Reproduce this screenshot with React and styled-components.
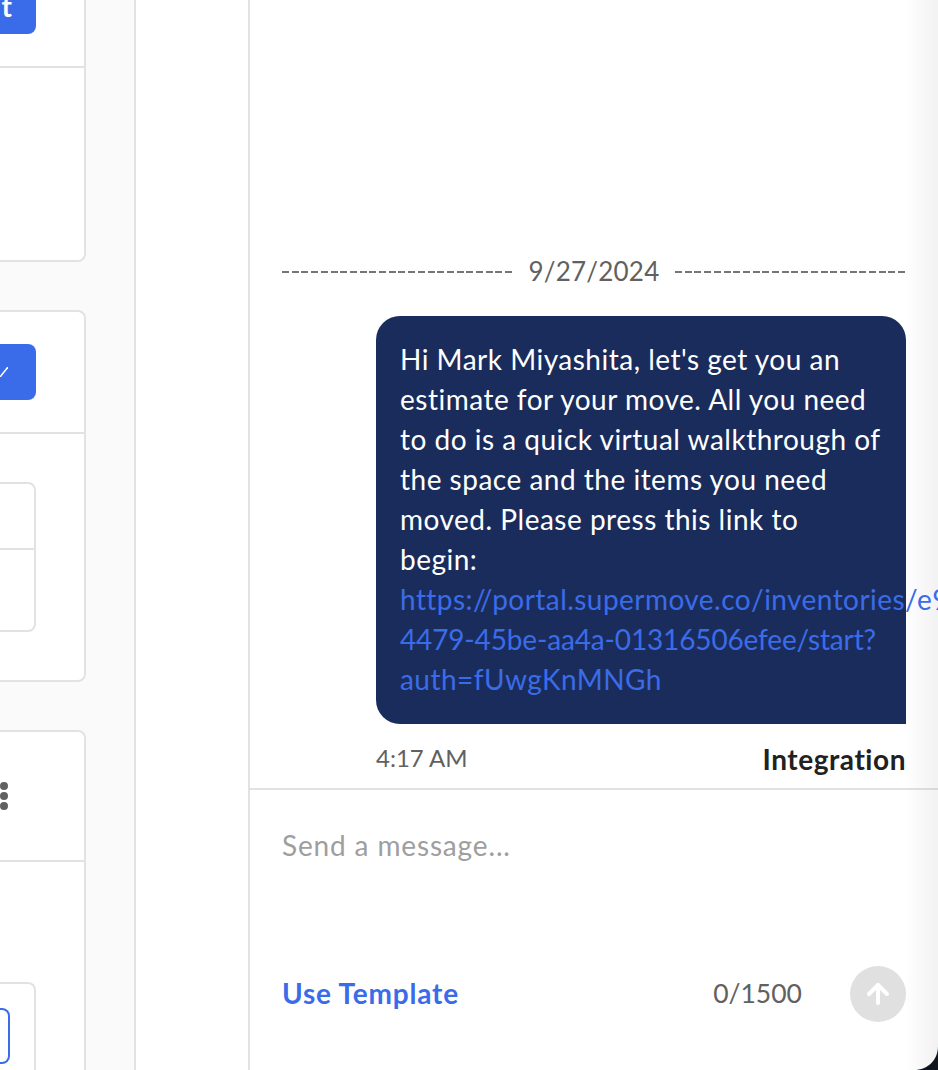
import React from 'react';
import styled, { createGlobalStyle } from 'styled-components';

const GlobalStyle = createGlobalStyle`
  html, body {
    margin: 0;
    padding: 0;
    height: 100%;
    overflow: hidden;
    background: #fff;
  }
  #root {
    height: 100%;
  }
`

const Page = styled.div`
  position: relative;
  display: flex;
  width: 938px;
  height: 1070px;
  overflow: hidden;
  background: #fafafa;
  font-family: Lato, "Liberation Sans", sans-serif;
  color: #212121;
`

const LeftColumn = styled.div`
  flex: none;
  width: 86px;
  height: 100%;
  display: flex;
  flex-direction: column;
`

const Card = styled.div`
  flex: none;
  height: ${props => props.$height}px;
  margin-top: ${props => props.$top || 0}px;
  margin-left: -20px;
  display: flex;
  flex-direction: column;
  box-sizing: border-box;
  background: #fff;
  border: 2px solid #e2e2e2;
  border-top-width: ${props => props.$open ? 0 : 2}px;
  border-bottom-width: ${props => props.$cut ? 0 : 2}px;
  border-radius: ${props => props.$open ? '0 0 8px 0' : props.$cut ? '8px 8px 0 0' : '8px'};
`

const CardHeader = styled.div`
  flex: none;
  height: ${props => props.$height}px;
  box-sizing: border-box;
  display: flex;
  justify-content: flex-end;
  align-items: ${props => props.$center ? 'center' : 'flex-end'};
  padding: 0 48px ${props => props.$center ? 0 : 32}px 0;
  border-bottom: 2px solid #e2e2e2;
`

const CardBody = styled.div`
  flex: 1;
  display: flex;
  flex-direction: column;
  align-items: flex-end;
  padding: ${props => props.$pad}px 48px 0 0;
`

const PrimaryButton = styled.div`
  flex: none;
  width: 60px;
  height: 56px;
  display: flex;
  justify-content: flex-end;
  align-items: center;
  padding-right: 24px;
  box-sizing: border-box;
  background: #3a6cea;
  border-radius: 0 8px 8px 0;
  color: #fff;
  font-size: 28px;
  font-weight: 700;
`

const EditIcon = styled.svg`
  margin-right: 4px;
`

const InnerTable = styled.div`
  width: 60px;
  height: ${props => props.$height}px;
  box-sizing: border-box;
  border: 2px solid #e2e2e2;
  border-left: 0;
  border-bottom-width: ${props => props.$cut ? 0 : 2}px;
  border-radius: ${props => props.$cut ? '0 8px 0 0' : '0 8px 8px 0'};
`

const TableLine = styled.div`
  height: 66px;
  box-sizing: border-box;
  border-bottom: 2px solid #e2e2e2;
`

const OutlineButton = styled.div`
  width: 34px;
  height: 56px;
  margin-top: 24px;
  margin-right: 26px;
  box-sizing: border-box;
  border: 2px solid #3a6cea;
  border-left: 0;
  border-radius: 0 8px 8px 0;
`

const Dots = styled.div`
  display: flex;
  flex-direction: column;
  gap: 2px;
  margin-right: 28px;
`

const Dot = styled.span`
  width: 8px;
  height: 8px;
  border-radius: 50%;
  background: #616161;
`

const Rail = styled.div`
  flex: none;
  width: 114px;
  height: 100%;
  margin-left: 48px;
  box-sizing: border-box;
  background: #fff;
  border-left: 2px solid #e2e2e2;
`

const ChatPanel = styled.div`
  flex: 1;
  min-width: 0;
  height: 100%;
  display: flex;
  flex-direction: column;
  box-sizing: border-box;
  background: #fff;
  border-left: 2px solid #e2e2e2;
`

const Thread = styled.div`
  flex: none;
  height: 790px;
  box-sizing: border-box;
  padding: 0 32px;
  display: flex;
  flex-direction: column;
  border-bottom: 2px solid #e2e2e2;
`

const DateRow = styled.div`
  margin-top: 255px;
  height: 32px;
  display: flex;
  align-items: center;
  gap: 16px;
  color: #616161;
  font-size: 26px;
  letter-spacing: 0.2px;
  line-height: 32px;
  white-space: nowrap;
`

const DashLine = styled.div`
  flex: 1;
  height: 2px;
  margin-top: 2px;
  background: repeating-linear-gradient(to right, #757575 0, #757575 7px, transparent 7px, transparent 9.7px);
`

const Bubble = styled.div`
  align-self: flex-end;
  width: 530px;
  height: 408px;
  margin-top: 29px;
  box-sizing: border-box;
  padding: 23px 24px 0;
  background: #1a2c5b;
  border-radius: 24px 24px 0 24px;
  color: #fff;
  font-size: 28px;
  letter-spacing: 0.5px;
  line-height: 40px;
`

const BubbleLink = styled.span`
  position: relative;
  z-index: 1;
  color: #3a6cea;
  letter-spacing: ${props => props.$spacing}px;
  white-space: nowrap;
`

const MetaRow = styled.div`
  align-self: flex-end;
  width: 530px;
  margin-top: 20px;
  display: flex;
  justify-content: space-between;
  align-items: center;
`

const Time = styled.div`
  color: #616161;
  font-size: 24px;
  line-height: 28px;
  padding-bottom: 2px;
`

const Sender = styled.div`
  color: #212121;
  font-size: 28px;
  font-weight: 700;
  letter-spacing: 0.55px;
  line-height: 30px;
`

const Composer = styled.div`
  flex: 1;
  display: flex;
  flex-direction: column;
  box-sizing: border-box;
  padding: 40px 32px 48px;
`

const Placeholder = styled.div`
  flex: 1;
  color: #9e9e9e;
  font-size: 28px;
  letter-spacing: 0.85px;
  line-height: 30px;
`

const ComposerFooter = styled.div`
  display: flex;
  align-items: center;
`

const TemplateLink = styled.div`
  flex: 1;
  color: #3a6cea;
  font-size: 28px;
  font-weight: 700;
  letter-spacing: 0.8px;
  padding-bottom: 2px;
`

const Counter = styled.div`
  color: #616161;
  font-size: 26.5px;
  margin-right: 48px;
  padding-bottom: 2px;
`

const SendButton = styled.div`
  width: 56px;
  height: 56px;
  display: flex;
  justify-content: center;
  align-items: center;
  border-radius: 50%;
  background: #e0e0e0;
`

const EdgeShadow = styled.div`
  position: absolute;
  top: 0;
  right: 0;
  bottom: 0;
  width: 34px;
  background: linear-gradient(to right, rgba(0, 0, 0, 0), rgba(0, 0, 0, 0.05));
  pointer-events: none;
`

const CornerMask = styled.svg`
  position: absolute;
  right: 0;
  bottom: 0;
`

export default function App() {
  return (
    <Page>
      <GlobalStyle />
      <LeftColumn>
        <Card $open $height={262}>
          <CardHeader $height={68}>
            <PrimaryButton>t</PrimaryButton>
          </CardHeader>
        </Card>
        <Card $top={48} $height={372}>
          <CardHeader $height={122}>
            <PrimaryButton>
              <EditIcon width="8" height="10" viewBox="0 0 8 10" fill="none" stroke="#fff" strokeWidth="1.5">
                <path d="M8 0L0 10" />
              </EditIcon>
            </PrimaryButton>
          </CardHeader>
          <CardBody $pad={48}>
            <InnerTable $height={150}>
              <TableLine />
            </InnerTable>
          </CardBody>
        </Card>
        <Card $cut $top={48} $height={340}>
          <CardHeader $center $height={130}>
            <Dots>
              <Dot />
              <Dot />
              <Dot />
            </Dots>
          </CardHeader>
          <CardBody $pad={120}>
            <InnerTable $cut $height={88}>
              <OutlineButton />
            </InnerTable>
          </CardBody>
        </Card>
      </LeftColumn>
      <Rail />
      <ChatPanel>
        <Thread>
          <DateRow>
            <DashLine />
            9/27/2024
            <DashLine />
          </DateRow>
          <Bubble>
            Hi Mark Miyashita, let's get you an estimate for your move. All you need to do is a quick virtual walkthrough of the space and the items you need moved. Please press this link to
            <br />
            begin:
            <br />
            <BubbleLink $spacing={0.45}>https://portal.supermove.co/inventories/e9a1c2d3-</BubbleLink>
            <br />
            <BubbleLink $spacing={-0.15}>4479-45be-aa4a-01316506efee/start?</BubbleLink>
            <br />
            <BubbleLink $spacing={0.45}>auth=fUwgKnMNGh</BubbleLink>
          </Bubble>
          <MetaRow>
            <Time>4:17 AM</Time>
            <Sender>Integration</Sender>
          </MetaRow>
        </Thread>
        <Composer>
          <Placeholder>Send a message...</Placeholder>
          <ComposerFooter>
            <TemplateLink>Use Template</TemplateLink>
            <Counter>0/1500</Counter>
            <SendButton>
              <svg width="26" height="26" viewBox="0 0 26 26" fill="none" stroke="#fff" strokeWidth="4" strokeLinecap="round" strokeLinejoin="round">
                <path d="M13 22V4" />
                <path d="M4 13l9-9 9 9" />
              </svg>
            </SendButton>
          </ComposerFooter>
        </Composer>
      </ChatPanel>
      <EdgeShadow />
      <CornerMask width="24" height="24" viewBox="0 0 24 24">
        <path d="M24 0V24H0C14 24 24 14 24 0Z" fill="#10141f" />
      </CornerMask>
    </Page>
  );
}
